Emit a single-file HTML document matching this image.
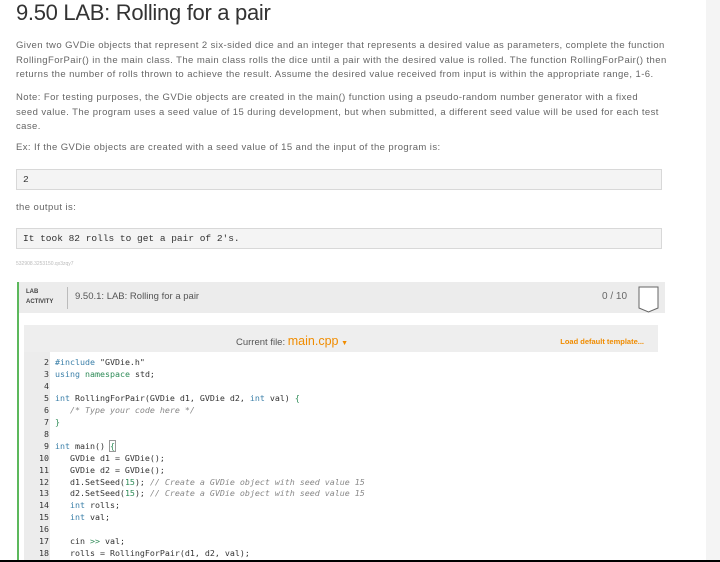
<!DOCTYPE html>
<html style="overflow:hidden;height:562px"><head><style>
body{margin:0;width:720px;height:562px;overflow:hidden;background:#fff;font-family:"Liberation Sans",sans-serif;position:relative}
.side{position:absolute;left:706px;top:0;width:14px;height:562px;background:#f4f4f4}
.t{position:absolute;left:16px;top:0;font-size:22px;color:#333;letter-spacing:-0.3px}
.p{position:absolute;left:16px;font-size:9.5px;color:#666;line-height:14.6px;white-space:nowrap;letter-spacing:0.42px}
.box{position:absolute;left:16px;height:21px;background:#f4f4f4;border:1px solid #d8d8d8;font-family:"Liberation Mono",monospace;color:#333;font-size:9.5px;line-height:19px;padding-left:6px;box-sizing:border-box;width:646px}
.w{position:absolute;left:17px;top:282px;width:646px;height:278px;border-left:2px solid #5cb85c;background:#fff;overflow:hidden}
.wh{height:31px;background:#ececec;position:relative}
.code{position:absolute;left:24px;top:325px;width:634px;height:235px;background:#fff;overflow:hidden}
.ch{height:27px;background:#eeeeee;position:relative}
.gut{position:absolute;left:0;top:27px;width:26px;height:220px;background:#ececec}
.ln{position:absolute;font-family:"DejaVu Sans Mono",monospace;font-size:8.3px;color:#333;white-space:pre;line-height:11.95px}
.k{color:#3a7fa8}.g{color:#2e8b57}.c{color:#888;font-style:italic}
</style></head><body>
<div class="side"></div>
<div class="t">9.50 LAB: Rolling for a pair</div>
<div class="p" style="top:39px">Given two GVDie objects that represent 2 six-sided dice and an integer that represents a desired value as parameters, complete the function<br>RollingForPair() in the main class. The main class rolls the dice until a pair with the desired value is rolled. The function RollingForPair() then<br>returns the number of rolls thrown to achieve the result. Assume the desired value received from input is within the appropriate range, 1-6.</div>
<div class="p" style="top:91px">Note: For testing purposes, the GVDie objects are created in the main() function using a pseudo-random number generator with a fixed<br>seed value. The program uses a seed value of 15 during development, but when submitted, a different seed value will be used for each test<br>case.</div>
<div class="p" style="top:141px">Ex: If the GVDie objects are created with a seed value of 15 and the input of the program is:</div>
<div class="box" style="top:169px">2</div>
<div class="p" style="top:201px">the output is:</div>
<div class="box" style="top:228px">It took 82 rolls to get a pair of 2's.</div>
<div class="p" style="top:257px;font-size:5px;color:#bbb;letter-spacing:0">532908.3253150.qx3zqy7</div>
<div class="w"><div class="wh">
<div style="position:absolute;left:7px;top:5px;font-size:6px;font-weight:bold;color:#444;line-height:10px">LAB<br>ACTIVITY</div>
<div style="position:absolute;left:48px;top:5px;width:1px;height:22px;background:#bbb"></div>
<div style="position:absolute;left:56px;top:9px;font-size:9.5px;color:#555">9.50.1: LAB: Rolling for a pair</div>
<div style="position:absolute;left:583px;top:9px;font-size:10px;color:#666">0 / 10</div>
<svg style="position:absolute;left:619px;top:4px" width="22" height="28"><path d="M1 1H20V22L10.5 26L1 22Z" fill="#fff" stroke="#666" stroke-width="1"/></svg>
</div></div>
<div class="code"><div class="ch">
<div style="position:absolute;left:212px;top:9px;font-size:9.5px;color:#555">Current file: <span style="color:#f08c00;font-size:12.5px">main.cpp</span> <span style="color:#f08c00;font-size:7px">▼</span></div>
<div style="position:absolute;right:14px;top:12px;font-size:7.5px;font-weight:bold;color:#f08c00">Load default template...</div>
</div><div class="gut"></div></div>
<div style="position:absolute;left:24px;top:352px;width:634px;height:208px;overflow:hidden">
<div class="ln" style="left:10px;top:5px;text-align:right;width:15px">2
3
4
5
6
7
8
9
10
11
12
13
14
15
16
17
18</div>
<div class="ln" style="left:31px;top:5px"><span class="k">#include</span> "GVDie.h"
<span class="k">using</span> <span class="g">namespace</span> std;

<span class="k">int</span> RollingForPair(GVDie d1, GVDie d2, <span class="k">int</span> val) <span class="g">{</span>
   <span class="c">/* Type your code here */</span>
<span class="g">}</span>

<span class="k">int</span> main() <span class="g" style="outline:1px solid #999">{</span>
   GVDie d1 = GVDie();
   GVDie d2 = GVDie();
   d1.SetSeed(<span class="g">15</span>); <span class="c">// Create a GVDie object with seed value 15</span>
   d2.SetSeed(<span class="g">15</span>); <span class="c">// Create a GVDie object with seed value 15</span>
   <span class="k">int</span> rolls;
   <span class="k">int</span> val;

   cin <span class="g">&gt;&gt;</span> val;
   rolls = RollingForPair(d1, d2, val);</div>
</div>
<div style="position:absolute;left:0;top:560px;width:720px;height:2px;background:#000"></div>
</body></html>
